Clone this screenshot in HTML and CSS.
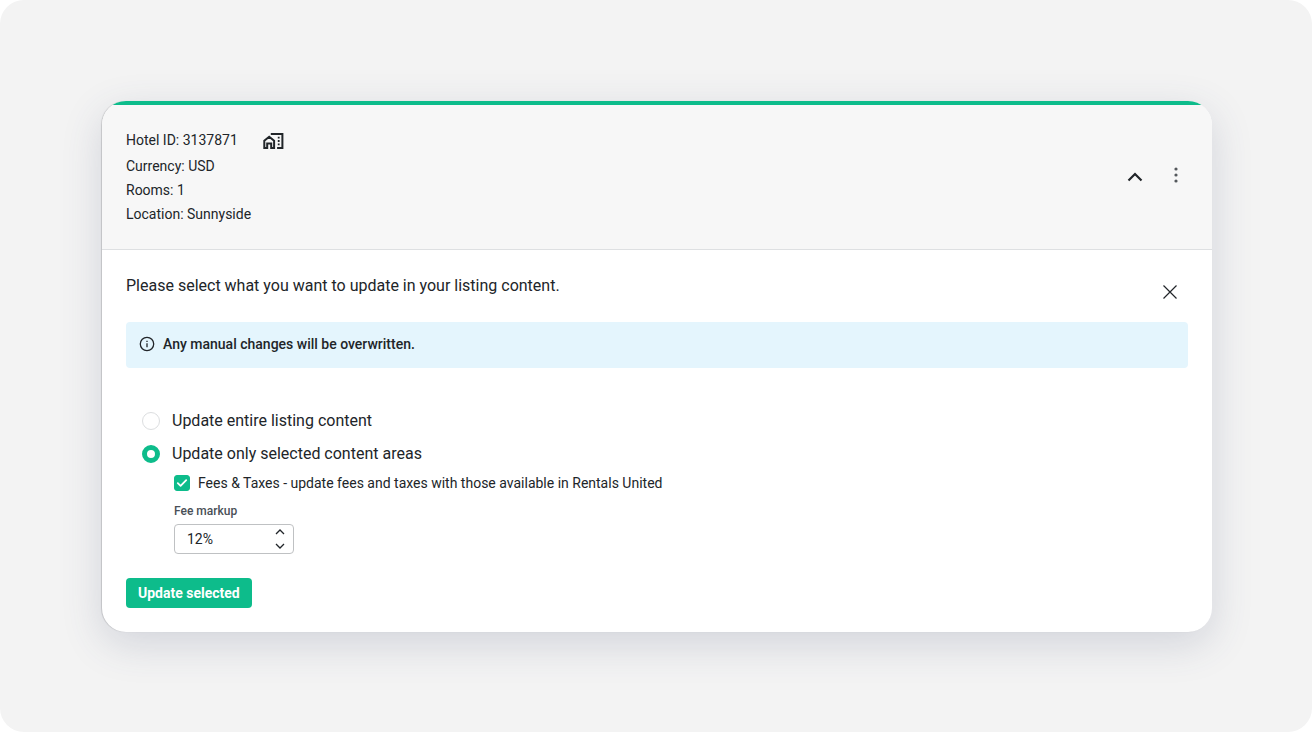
FILE: index.html
```html
<!DOCTYPE html>
<html lang="en">
<head>
    <meta charset="UTF-8">
    <meta name="viewport" content="width=device-width, initial-scale=1.0">
    <title>Update listing content</title>
    <link rel="stylesheet" href="styles.css">
</head>
<body>
<main class="stage">
    <section class="card">
        <header class="card-header">
            <div class="hotel-info">
                <div class="hotel-id">
                    <span>Hotel ID: 3137871</span>
                    <svg class="home-icon" viewBox="0 0 24 24" aria-hidden="true">
                        <path d="M2.3 20v-7.3l4.9-3.9 4.9 3.9V20H9.2v-4.6H5.2V20z"/>
                        <path d="M9.8 7V6h10.6v14h-5.3"/>
                        <path class="windows" d="M15.8 8.7h1.8v1.8h-1.8zM15.8 12.1h1.8v1.8h-1.8zM15.8 15.5h1.8v1.8h-1.8z"/>
                    </svg>
                </div>
                <div>Currency: USD</div>
                <div>Rooms: 1</div>
                <div>Location: Sunnyside</div>
            </div>
            <div class="header-actions">
                <button type="button" class="icon-button" aria-label="Collapse">
                    <svg viewBox="0 0 24 24"><path d="M5.5 16.5 12 10l6.5 6.5" stroke-width="2.2"/></svg>
                </button>
                <button type="button" class="icon-button menu" aria-label="More options">
                    <svg viewBox="0 0 24 24">
                        <circle cx="12" cy="5" r="1.6"/>
                        <circle cx="12" cy="11" r="1.6"/>
                        <circle cx="12" cy="17" r="1.6"/>
                    </svg>
                </button>
            </div>
        </header>

        <form class="card-body">
            <div class="body-head">
                <p class="intro">Please select what you want to update in your listing content.</p>
                <button type="button" class="close" aria-label="Close">
                    <svg viewBox="0 0 14 14"><path d="M.5.5l13 13M13.5.5l-13 13"/></svg>
                </button>
            </div>

            <div class="alert">
                <svg viewBox="0 0 16 16" aria-hidden="true">
                    <circle cx="8" cy="8" r="6.7"/>
                    <path d="M8 7.2v4M8 4.7v1.4"/>
                </svg>
                <span>Any manual changes will be overwritten.</span>
            </div>

            <div class="options">
                <label class="radio-row">
                    <input type="radio" name="scope" value="all">
                    <span>Update entire listing content</span>
                </label>
                <label class="radio-row">
                    <input type="radio" name="scope" value="selected" checked>
                    <span>Update only selected content areas</span>
                </label>
                <div class="areas">
                    <label class="check-row">
                        <span class="check">
                            <input type="checkbox" checked>
                            <svg viewBox="0 0 16 16" aria-hidden="true"><path d="M3.8 8.2l2.8 2.7 5.6-5.7"/></svg>
                        </span>
                        <span>Fees &amp; Taxes - update fees and taxes with those available in Rentals United</span>
                    </label>
                    <label class="field-label" for="markup">Fee markup</label>
                    <div class="stepper">
                        <input type="text" id="markup" value="12%">
                        <div class="arrows">
                            <button type="button" aria-label="Increase"><svg viewBox="0 0 10 6"><path d="M1 5l4-4 4 4"/></svg></button>
                            <button type="button" aria-label="Decrease"><svg viewBox="0 0 10 6"><path d="M1 1l4 4 4-4"/></svg></button>
                        </div>
                    </div>
                </div>
            </div>

            <button type="submit" class="submit">Update selected</button>
        </form>
    </section>
</main>
</body>
</html>
```
FILE: styles.css
```css
* {
    box-sizing: border-box;
}

body {
    margin: 0;
    background: #fff;
    color: #212529;
    font-family: Roboto, sans-serif;
    font-size: 14px;
    line-height: 24px;
}

button, input {
    margin: 0;
    font: inherit;
    color: inherit;
}

button {
    padding: 0;
    border: 0;
    background: none;
    cursor: pointer;
}

svg {
    display: block;
    fill: none;
    stroke: currentColor;
}

.stage {
    min-height: 100vh;
    padding: 101px 100px 100px 102px;
    border-radius: 24px;
    background: #f3f3f3;
}

.card {
    border-radius: 24px;
    background: #fff;
    box-shadow: 0 12px 40px rgba(60, 70, 110, 0.18), -1px 0 1px rgba(0, 0, 0, 0.15);
}

/* Header */
.card-header {
    display: flex;
    justify-content: space-between;
    align-items: center;
    padding: 25px 24px 23px;
    border-bottom: 1px solid #dee0e2;
    border-radius: 24px 24px 0 0;
    background: linear-gradient(#0dbc8b 4px, #f7f7f7 4px);
}

.hotel-id {
    display: flex;
    align-items: center;
    gap: 24px;
    height: 28px;
}

.home-icon {
    width: 24px;
    height: 24px;
    stroke-width: 2;
}

.home-icon .windows {
    fill: currentColor;
    stroke: none;
}

.header-actions {
    display: flex;
    align-items: center;
    gap: 17px;
}

.icon-button svg {
    width: 24px;
    height: 24px;
}

.menu svg {
    fill: #54585c;
    stroke: none;
}

/* Body */
.card-body {
    padding: 24px;
}

.body-head {
    display: flex;
    justify-content: space-between;
    margin-bottom: 12px;
}

.intro {
    margin: 0;
    font-size: 16px;
}

.close {
    display: flex;
    align-items: center;
    justify-content: center;
    width: 36px;
    height: 36px;
}

.close svg {
    width: 14px;
    height: 14px;
    stroke-width: 1.2;
}

.alert {
    display: flex;
    align-items: center;
    gap: 8px;
    margin-bottom: 36px;
    padding: 10px 13px 12px;
    border-radius: 4px;
    background: #e4f5fd;
    font-weight: 500;
}

.alert svg {
    width: 16px;
    height: 16px;
    stroke-width: 1.3;
}

.options {
    margin-bottom: 24px;
    padding-left: 16px;
}

.radio-row {
    display: flex;
    align-items: center;
    gap: 12px;
    height: 33px;
    font-size: 16px;
}

.radio-row input {
    appearance: none;
    width: 18px;
    height: 18px;
    border: 1px solid #dcdee0;
    border-radius: 50%;
    background: #fff;
}

.radio-row input:checked {
    border: 5px solid #0dbc8b;
}

.areas {
    padding-left: 32px;
}

.check-row {
    display: flex;
    align-items: center;
    gap: 8px;
    height: 26px;
}

.check {
    display: grid;
    width: 16px;
    height: 16px;
}

.check input,
.check svg {
    grid-area: 1 / 1;
    width: 16px;
    height: 16px;
}

.check input {
    appearance: none;
    border: 1px solid #c4c6c8;
    border-radius: 3px;
}

.check input:checked {
    border-color: #0dbc8b;
    background: #0dbc8b;
}

.check svg {
    z-index: 1;
    color: #fff;
    stroke-width: 1.8;
    stroke-linecap: round;
    stroke-linejoin: round;
    pointer-events: none;
}

.field-label {
    display: block;
    margin: 7px 0 5px;
    color: #495057;
    font-size: 12px;
    font-weight: 500;
    line-height: 16px;
}

.stepper {
    display: flex;
    width: 120px;
    height: 30px;
    border: 1px solid #bfc1c3;
    border-radius: 4px;
}

.stepper input {
    flex: 1;
    min-width: 0;
    padding: 0 0 0 12px;
    border: 0;
    background: none;
    outline: 0;
}

.arrows {
    display: flex;
    flex-direction: column;
    justify-content: space-between;
    padding: 4px 8px;
}

.arrows svg {
    width: 10px;
    height: 6px;
    stroke-width: 1.3;
}

.submit {
    display: block;
    height: 30px;
    padding: 0 12px 1px;
    border-radius: 4px;
    background: #0dbc8b;
    color: #fff;
    font-weight: 700;
}
```
